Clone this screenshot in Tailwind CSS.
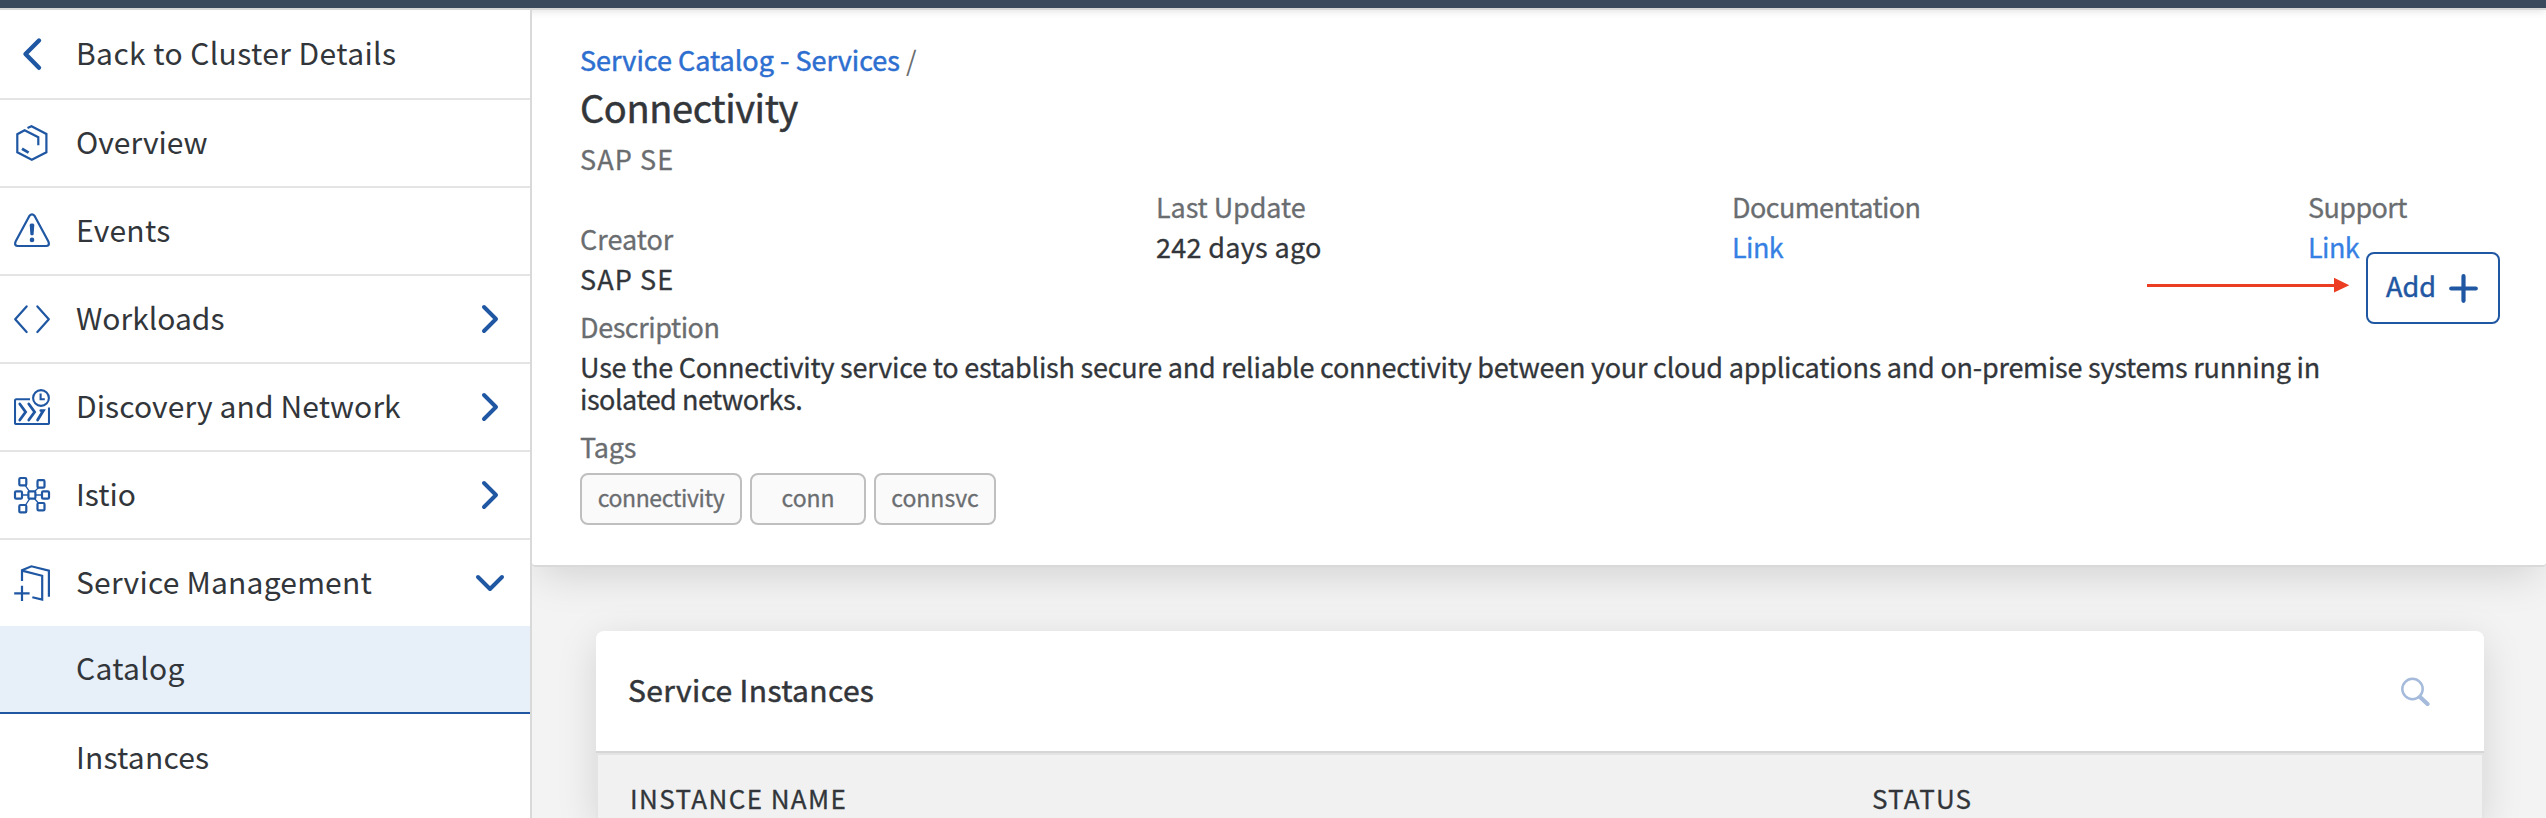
<!DOCTYPE html>
<html lang="en">
<head>
<meta charset="utf-8">
<title>Connectivity</title>
<script src="https://cdn.jsdelivr.net/npm/@tailwindcss/browser@4"></script>
</head>
<body class="flex h-[818px] w-[2546px] flex-col overflow-hidden bg-white font-['Noto_Sans_CJK_SC','Noto_Sans',sans-serif] text-[27px] leading-8 text-[#32363a]">
  <header class="relative z-10 h-[10px] shrink-0 border-b-2 border-[#d6d6d6] bg-[#3a495b] shadow-[0_1px_8px_rgba(0,0,0,0.12)]"></header>

  <div class="flex min-h-0 flex-1">
    <nav class="relative z-20 w-[532px] shrink-0 border-r-2 border-[#d9d9d9] bg-white text-[30px] text-[#32363a]">
      <a class="flex h-[90px] items-center border-b-2 border-[#e4e4e4] pl-[14px]">
        <svg class="size-9 shrink-0 text-[#1f57a3]" viewBox="0 0 36 36" fill="none" stroke="currentColor" stroke-width="4.4" stroke-linecap="round" stroke-linejoin="round"><path d="M25 4.5 11.5 18 25 31.8"/></svg>
        <span class="ml-[26px] pb-1 tracking-[0.4px]">Back to Cluster Details</span>
      </a>
      <a class="flex h-[88px] items-center border-b-2 border-[#e4e4e4] pl-[14px]">
        <svg class="size-9 shrink-0 text-[#1f57a3]" viewBox="0 0 36 36" fill="none" stroke="currentColor" stroke-width="2.2"><path d="M13.5 3 17.5 1.2 32.4 9V27.3L17.8 34.7 3.3 27.3V9.2L10.6 5.2 24.3 12.2V20.3"/><path d="m8 23.8 6.6 3.8" stroke-width="2.8"/></svg>
        <span class="ml-[26px] pb-1">Overview</span>
      </a>
      <a class="flex h-[88px] items-center border-b-2 border-[#e4e4e4] pl-[14px]">
        <svg class="size-9 shrink-0 text-[#1f57a3]" viewBox="0 0 36 36" fill="none" stroke="currentColor" stroke-width="2.2"><path d="M15.5 2.8Q18 0 20.5 2.8L34.4 28.6Q36 33 32 33H4Q0 33 1.6 28.6Z" stroke-linejoin="round"/><path d="M15.7 12Q15.7 10.6 18 10.6T20.3 12L19.6 21.4Q19.4 22.3 18 22.3T16.4 21.4Z" fill="currentColor" stroke="none"/><circle cx="18" cy="26.9" r="2.3" fill="currentColor" stroke="none"/></svg>
        <span class="ml-[26px] pb-1 tracking-[0.3px]">Events</span>
      </a>
      <a class="flex h-[88px] items-center border-b-2 border-[#e4e4e4] pl-[14px] pr-6">
        <svg class="size-9 shrink-0 text-[#1f57a3]" viewBox="0 0 36 36" fill="none" stroke="currentColor" stroke-width="2.2" stroke-linecap="round" stroke-linejoin="round"><path d="M12.6 5.4 1.2 18.2 12.6 31M23.4 5.4 34.8 18.2 23.4 31"/></svg>
        <span class="ml-[26px] flex-1 pb-1">Workloads</span>
        <svg class="size-8 text-[#1f57a3]" viewBox="0 0 32 32" fill="none" stroke="currentColor" stroke-width="4" stroke-linecap="round" stroke-linejoin="round"><path d="M10 4 22 16 10 28"/></svg>
      </a>
      <a class="flex h-[88px] items-center border-b-2 border-[#e4e4e4] pl-[14px] pr-6">
        <svg class="size-9 shrink-0 text-[#1f57a3]" viewBox="0 0 36 36" fill="none" stroke="currentColor" stroke-width="2.1"><path d="M16 10.3H2.2Q1 10.3 1 11.5V34Q1 35 2.2 35H33.8Q35 35 35 34V18.6"/><circle cx="27" cy="9" r="7.9"/><path d="M26.6 4.6V10.2H30.8"/><path d="M5.8 15 11.6 23 5.8 31M14.8 15 20.6 23 14.8 31M26.8 21.6H29.4L23.6 31" stroke-width="2.8" stroke-linecap="round"/></svg>
        <span class="ml-[26px] flex-1 pb-1 tracking-[0.1px]">Discovery and Network</span>
        <svg class="size-8 text-[#1f57a3]" viewBox="0 0 32 32" fill="none" stroke="currentColor" stroke-width="4" stroke-linecap="round" stroke-linejoin="round"><path d="M10 4 22 16 10 28"/></svg>
      </a>
      <a class="flex h-[88px] items-center border-b-2 border-[#e4e4e4] pl-[14px] pr-6">
        <svg class="size-9 shrink-0 overflow-visible text-[#1f57a3]" viewBox="0 0 36 36" fill="none" stroke="currentColor" stroke-width="2.2"><g><rect x="5.3" y="1" width="7" height="7.4" rx="1.2"/><rect x="23.5" y="3.2" width="7" height="7.4" rx="1.2"/><rect x="1" y="14.3" width="7" height="7.4" rx="1.2"/><rect x="14.4" y="14.3" width="7" height="7.4" rx="1.2"/><rect x="28" y="14.3" width="7" height="7.4" rx="1.2"/><rect x="23.5" y="26" width="7" height="7.4" rx="1.2"/><rect x="5.3" y="28" width="7" height="7.4" rx="1.2"/></g><path d="M11.4 8.6 15.4 14.3M24.6 10.6 20.8 14.3M8 18H14.4M21.4 18H28M15.6 21.8 11.6 28M20.6 21.8 24.4 26" stroke-width="1.3"/></svg>
        <span class="ml-[26px] flex-1 pb-1">Istio</span>
        <svg class="size-8 text-[#1f57a3]" viewBox="0 0 32 32" fill="none" stroke="currentColor" stroke-width="4" stroke-linecap="round" stroke-linejoin="round"><path d="M10 4 22 16 10 28"/></svg>
      </a>
      <a class="flex h-[86px] items-center pl-[14px] pr-6">
        <svg class="size-9 shrink-0 text-[#1f57a3]" viewBox="0 0 36 36" fill="none" stroke="currentColor" stroke-width="2.2"><path d="M8 16V5.2L17.4 1.3 34.9 5.6V31.7"/><path d="M8 5.6 28.2 10.8V34.6L18.3 32.2"/><path d="M8 20.7V36M.2 28.3H15.6"/></svg>
        <span class="ml-[26px] flex-1 pb-1 tracking-[0.2px]">Service Management</span>
        <svg class="size-8 text-[#1f57a3]" viewBox="0 0 32 32" fill="none" stroke="currentColor" stroke-width="4" stroke-linecap="round" stroke-linejoin="round"><path d="M4 10 16 22 28 10"/></svg>
      </a>
      <a class="flex h-[88px] items-center border-b-2 border-[#1f57a3] bg-[#e7eff9] pb-1 pl-[76px] tracking-[0.3px]">Catalog</a>
      <a class="flex h-[88px] items-center pb-1 pl-[76px] tracking-[0.2px]">Instances</a>
    </nav>

    <main class="flex min-w-0 flex-1 flex-col overflow-hidden bg-[#f3f3f3]">
      <section class="relative h-[557px] shrink-0 rounded-b-[4px] border-b-2 border-[#d9d9d9] bg-white pl-12 pt-[34px] shadow-[0_14px_40px_-8px_rgba(0,0,0,0.15)]">
        <div class="text-[#6a6d70]"><a class="text-[#2d6fd0] [-webkit-text-stroke:0.5px_#2d6fd0]">Service Catalog - Services</a> /</div>
        <h1 class="mt-[10px] text-[38px] leading-[42px] tracking-[-0.4px] [-webkit-text-stroke:0.5px_#32363a]">Connectivity</h1>
        <p class="mt-[15px] tracking-[1.1px] text-[#6a6d70] [-webkit-text-stroke:0.3px_#6a6d70]">SAP SE</p>

        <dl class="mt-4 grid h-[104px] grid-cols-[repeat(4,576px)]">
          <div class="mt-8 flex flex-col gap-2">
            <dt class="text-[#6a6d70] [-webkit-text-stroke:0.3px_#6a6d70]">Creator</dt>
            <dd class="tracking-[1.1px] [-webkit-text-stroke:0.3px_#32363a]">SAP SE</dd>
          </div>
          <div class="flex flex-col gap-2">
            <dt class="tracking-[-0.1px] text-[#6a6d70] [-webkit-text-stroke:0.3px_#6a6d70]">Last Update</dt>
            <dd class="tracking-[0.3px] [-webkit-text-stroke:0.3px_#32363a]">242 days ago</dd>
          </div>
          <div class="flex flex-col gap-2">
            <dt class="tracking-[-0.6px] text-[#6a6d70] [-webkit-text-stroke:0.3px_#6a6d70]">Documentation</dt>
            <dd class="tracking-[-0.6px] text-[#3680e4] [-webkit-text-stroke:0.3px_#3680e4]">Link</dd>
          </div>
          <div class="flex flex-col gap-2">
            <dt class="tracking-[-0.6px] text-[#6a6d70] [-webkit-text-stroke:0.3px_#6a6d70]">Support</dt>
            <dd class="tracking-[-0.6px] text-[#3680e4] [-webkit-text-stroke:0.3px_#3680e4]">Link</dd>
          </div>
        </dl>

        <h2 class="mt-4 tracking-[-0.45px] text-[#6a6d70] [-webkit-text-stroke:0.3px_#6a6d70]">Description</h2>
        <p class="mt-2 w-[1780px] tracking-[-0.23px] [-webkit-text-stroke:0.3px_#32363a]">Use the Connectivity service to establish secure and reliable connectivity between your cloud applications and on-premise systems running in<br><span class="tracking-[-0.5px]">isolated networks.</span></p>
        <h2 class="mt-4 tracking-[-0.2px] text-[#6a6d70] [-webkit-text-stroke:0.3px_#6a6d70]">Tags</h2>
        <div class="mt-[10px] flex gap-2 text-[23px] text-[#6a6d70] [-webkit-text-stroke:0.3px_#6a6d70]">
          <span class="flex h-[52px] w-[162px] items-center justify-center rounded-lg border-2 border-[#bfbfbf] bg-[#fafafa] pb-1 tracking-[-0.4px]">connectivity</span>
          <span class="flex h-[52px] w-[116px] items-center justify-center rounded-lg border-2 border-[#bfbfbf] bg-[#fafafa] pb-1 tracking-[-0.1px]">conn</span>
          <span class="flex h-[52px] w-[122px] items-center justify-center rounded-lg border-2 border-[#bfbfbf] bg-[#fafafa] pb-1">connsvc</span>
        </div>

        <!-- Arrow annotation pointing at the Add button -->
        <svg class="absolute left-[1615px] top-[267px] h-4 w-[204px]" viewBox="0 0 204 16"><path d="M0 8.4H190" stroke="#ec3d23" stroke-width="3"/><path d="M187 .8 202.3 8.2 187 15.6Z" fill="#ec3d23"/></svg>
        <button class="absolute left-[1834px] top-[242px] flex h-[72px] w-[134px] items-center gap-[14px] rounded-lg border-2 border-[#1f57a3] bg-white pl-[18px] text-[#1f57a3]">
          <span class="w-[49px] pb-[5px] [-webkit-text-stroke:0.5px_#1f57a3]">Add</span>
          <svg class="size-[29px]" viewBox="0 0 29 29" fill="none" stroke="currentColor" stroke-width="4.2" stroke-linecap="round"><path d="M14.5 2.2V26.8M2.2 14.5H26.8"/></svg>
        </button>
      </section>

      <section class="ml-16 mr-[62px] mt-16 flex-1 rounded-t-lg bg-white shadow-[0_10px_40px_rgba(0,0,0,0.13)]">
        <div class="flex h-[122px] items-center justify-between border-b-2 border-[#d6d6d6] pl-8 pr-[54px]">
          <h2 class="pb-1 text-[30px] tracking-[0.35px] [-webkit-text-stroke:0.5px_#32363a]">Service Instances</h2>
          <svg class="size-[29px] text-[#a6bbdb]" viewBox="0 0 29 29" fill="none" stroke="currentColor"><circle cx="11.5" cy="12" r="10.2" stroke-width="2.5"/><path d="M19 20 26.5 27" stroke-width="4.2" stroke-linecap="round"/></svg>
        </div>
        <div class="flex h-[65px] border-2 border-b-0 border-[#e4e4e4] bg-[#f1f1f1] pt-[27px] text-[26px] [-webkit-text-stroke:0.3px_#32363a]">
          <div class="w-[1242px] pl-8 tracking-[1.4px]">INSTANCE NAME</div>
          <div class="pl-8 tracking-[1.2px]">STATUS</div>
        </div>
      </section>
    </main>
  </div>
</body>
</html>
